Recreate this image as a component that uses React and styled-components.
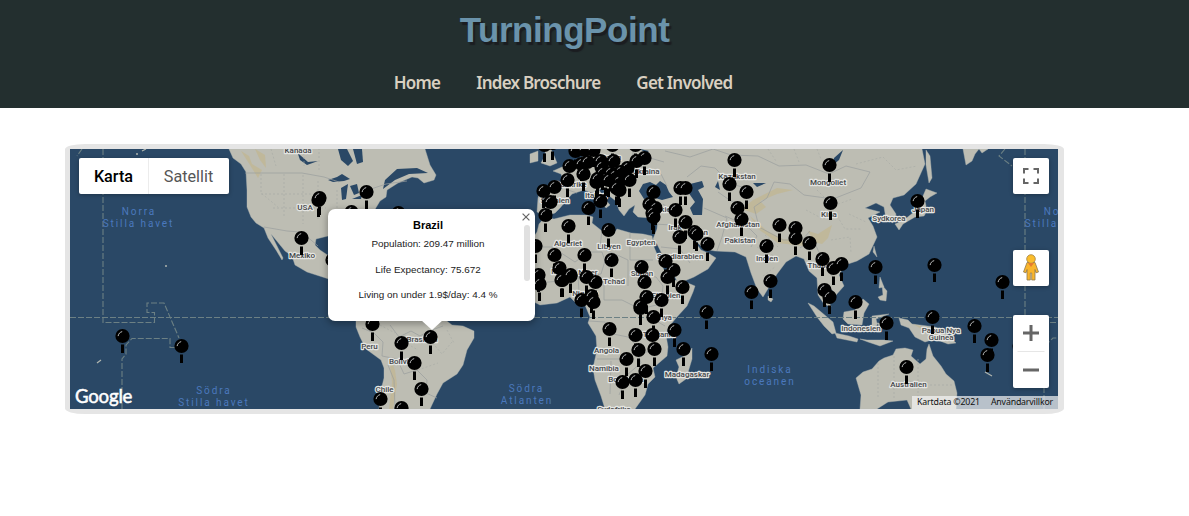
import React from 'react';
import styled, { createGlobalStyle } from 'styled-components';

const GlobalStyle = createGlobalStyle`
  body { margin: 0; background: #fff; font-family: "Liberation Sans", Arial, sans-serif; }
  * { box-sizing: border-box; }
`;

const Header = styled.header`
  height: 108px;
  background: #232f2f;
  display: flex;
  flex-direction: column;
  align-items: center;
  padding: 9px 60px 0 0;
`;
const Title = styled.h1`
  margin: 0;
  font: bold 35px/42px "Liberation Sans", Arial, sans-serif;
  letter-spacing: -0.45px;
  color: #6a93ab;
  text-shadow: 2px 3px 1px #1b1d21;
`;
const Nav = styled.nav`
  display: flex;
  gap: 36px;
  margin: 20px 3px 0 0;
`;
const NavLink = styled.a`
  font: 600 17px/24px "Noto Sans", "Open Sans", sans-serif;
  letter-spacing: -0.77px;
  color: #d9d0c1;
  white-space: nowrap;
`;
const MapFrame = styled.main`
  width: 999px;
  height: 270px;
  margin: 36px 0 0 65px;
  border: 5px solid #e5e5e5;
  border-right-width: 6px;
  border-radius: 2%;
`;
const MapArea = styled.div`
  position: relative;
  width: 988px;
  height: 260px;
  overflow: hidden;
  background: #2a4866;
`;
const MapDrawing = styled.svg`
  display: block;
  width: 988px;
  height: 260px;
`;
const MapTypes = styled.div`
  position: absolute;
  left: 9px;
  top: 9px;
  width: 150px;
  height: 36px;
  display: flex;
  background: #fff;
  border-radius: 2px;
  box-shadow: 0 1px 4px rgba(0, 0, 0, 0.3);
`;
const MapType = styled.button`
  width: ${(p) => (p.$active ? 69 : 81)}px;
  border: 0;
  border-left: ${(p) => (p.$active ? '0' : '1px solid #ececec')};
  padding: ${(p) => (p.$active ? '1px 0 0' : '1px 1px 0 0')};
  background: none;
  color: ${(p) => (p.$active ? '#000' : '#565656')};
  font: ${(p) => (p.$active ? 500 : 400)} 16.2px/35px Roboto, sans-serif;
`;
const Control = styled.button`
  position: absolute;
  right: 9px;
  top: ${(p) => p.$top}px;
  width: 36px;
  height: ${(p) => p.$height || 36}px;
  padding: 0;
  border: 0;
  border-radius: 2px;
  background: #fff;
  display: flex;
  align-items: center;
  justify-content: center;
  box-shadow: 0 1px 4px rgba(0, 0, 0, 0.3);
`;
const Popup = styled.section`
  position: absolute;
  left: 257.5px;
  top: 60px;
  width: 207px;
  height: 111.5px;
  padding: 9px 6px 0 0;
  border-radius: 7px;
  background: #fff;
  box-shadow: 0 2px 7px 1px rgba(0, 0, 0, 0.3);
  text-align: center;
  color: #222;
  &::after {
    content: '';
    position: absolute;
    left: 93px;
    top: 111px;
    border: 11px solid transparent;
    border-top: 10px solid #fff;
    border-bottom: 0;
  }
`;
const Country = styled.h2`
  margin: 0;
  font: bold 11px/14px "Liberation Sans", sans-serif;
  color: #000;
`;
const Fact = styled.p`
  margin: 0 0 ${(p) => p.$after || 12}px;
  font: 9.9px/14px "Liberation Sans", sans-serif;
  padding-top: ${(p) => (p.$first ? 5 : 0)}px;
`;
const Close = styled.svg`
  position: absolute;
  right: 5px;
  top: 4px;
`;
const ScrollThumb = styled.div`
  position: absolute;
  right: 5px;
  top: 16px;
  width: 6px;
  height: 56px;
  border-radius: 3px;
  background: #e0e0e0;
`;
const Credits = styled.div`
  position: absolute;
  right: 0;
  bottom: 0;
  height: 13px;
  display: flex;
  gap: 11px;
  padding: 0 5px;
  background: rgba(245, 245, 245, 0.7);
  color: #111;
  font: 8.8px/13px "Noto Sans", sans-serif;
  letter-spacing: -0.18px;
  white-space: nowrap;
`;
const GoogleMark = styled.div`
  position: absolute;
  left: 5px;
  bottom: 2px;
  font: 400 18.6px/22px Lato, sans-serif;
  letter-spacing: -0.2px;
  color: #fff;
  -webkit-text-stroke: 0.5px #fff;
`;

const land = [
  // North America
  'M229 149L233 158L241 164L246 172L247 190L247 207L251 217L256 223L264 228L268 238L276 250L282 260L283 258L277 246L271 234L276 240L285 251L292 256L295 265L307 272L335 281V260L320 250L315 245L316 239L328 236L345 236V215L374 211L380 201L386 197L387 190L398 183L412 177L418 178L424 183L434 180L436 175L430 165L425 149Z',
  // South America
  'M356 318L356 327L360 337L366 349L381 360L384 368L384 378L381 390L379 409H430L437 394L443 383L457 374L463 365L467 350L474 338V331L463 326L452 325L443 318Z',
  // Africa
  'M530 242L537 232L539 224L545 217L554 219L570 215L587 215L593 217L592 223L602 231L612 236L617 229L631 233L643 234L652 236L654 247L659 259L664 270L672 280L683 281L695 286L693 292L687 306L676 318L668 328L666 335L668 347L667 356L653 368L655 377L648 384L645 395L635 409H605L601 396L595 380L593 368L597 350L596 336L588 323L590 317L585 305L577 304L570 297L557 303L540 305L530 300Z',
  // Europe and Asia
  'M591 149L588 154L580 158L573 163L562 167L553 171L561 174L564 181L562 189L541 188L538 198L537 212L546 216L555 213L560 208L565 202L572 194L584 190L593 193L600 201L606 208L610 205L605 199L599 190L602 188L608 195L616 201L619 210L624 216L629 209L635 205L633 212L638 217L650 218L658 217L657 229L653 239L657 244L664 258L671 269L677 281L682 282L694 277L708 269L716 258L708 253L701 250L694 241L688 236L695 240L704 249L715 251L735 252L746 257L751 273L757 289L763 297L769 287L777 274L786 262L796 256L804 259L809 271L817 278L818 295L824 304L831 307L828 298L823 291L824 284L832 290L836 295L844 286L839 275L845 265L857 261L869 254L877 237L873 226L868 218L880 212L865 208L876 203L884 207L886 219L893 223L896 214L890 205L893 198L904 195L916 184L925 164L922 149Z',
  'M543 149L546 154L541 163L550 166L557 163L555 158L551 149Z',
  'M530 154L538 151L538 161L530 163Z',
  'M926 150L930 156L932 178L929 183L926 165Z',
  'M926 189L937 193L930 197L925 201L927 211L924 216L915 217L903 224L899 230L895 224L904 220L914 212L920 203Z',
  'M963 149H979L975 154L972 161L966 165Z',
  'M979 149L982 153L988 149Z',
  'M808 303L814 306L833 322L836 333L832 334L824 326L817 317Z',
  'M835 333L849 336L858 339L857 342L837 338Z',
  'M844 312L855 310L863 299L869 304L864 313L862 325L848 324L843 319Z',
  'M872 316L889 314L876 319L877 323L885 323L879 328L878 323L874 330L872 326Z',
  'M860 339L867 340L884 340L893 341L880 346L868 342Z',
  'M882 285L887 291L886 301L880 300L878 297L883 295Z',
  'M880 277L884 287L879 288Z',
  'M873 252L874 246L877 257Z',
  'M899 318L908 320L912 324L935 327L947 334L956 343L948 344L935 339L925 342L915 337L909 328L901 325Z',
  'M856 378L863 372L872 369L879 361L884 358L893 355L896 349L905 348L913 350L911 356L920 364L926 359L927 349L929 344L933 356L941 366L946 374L954 381L957 393L956 409H911L907 400L888 402L877 409H860L861 395Z',
  'M676 360L688 354L692 348L692 359L686 379L679 384L676 377L679 367Z',
  'M768 296L773 299L771 302L768 300Z',
];
const water = [
  'M639 191L643 184L650 182L656 185L660 181L666 185L669 192L673 197L662 200L652 197L644 199Z',
  'M690 184L702 181L704 187L698 190L703 199L702 215L693 215L690 208L695 202L688 192Z',
  'M328 180L337 177L342 174L350 179L344 181L333 182Z',
  'M341 188L348 184L346 199L342 200Z',
  'M350 186L357 184L359 193L354 195Z',
  'M352 199L362 195L361 199Z',
  'M338 149H347L353 161L348 166L341 160Z',
  'M353 149H362L363 162L357 164Z',
  'M385 180L397 169L417 168L428 173L409 174L395 180L383 189Z',
  'M297 151L300 155L308 162L318 161L307 165L300 160Z',
  'M834 158L843 150L839 160L832 166Z',
  'M753 183L766 183L757 187Z',
  'M715 187L718 181L720 190Z',
  'M640 149L649 151L646 153Z',
];
const mountains = [
  'M241 151L249 156L252 164L262 170L258 178L250 165Z',
  'M255 149L265 155L266 168L260 160Z',
  'M742 209L753 200L777 188L793 190L777 194L760 201L766 207L756 214Z',
  'M750 216L767 231L783 239L806 241L804 246L778 243L758 229Z',
  'M808 231L818 234L832 225L828 238L822 244L814 242Z',
  'M389 356L395 370L397 384L393 409H389L392 382Z',
  'M588 184L599 181L606 184L598 187Z',
  'M913 324L934 330L940 337L925 331Z',
];
const borders = [
  'M245 173H302L324 177L339 182', 'M264 227L287 231L300 232L311 240L318 246',
  'M368 190L386 184L407 181', 'M362 328L374 333L383 342L382 356L397 359L404 374L417 370L427 380L426 393L437 398M388 365L394 380L395 409M390 325L399 337L411 331L420 336L429 331L443 326',
  'M538 247L552 247L575 262L589 252L602 252L605 261L601 274L569 280L539 283M602 230L600 247L628 260L628 286M653 260H630V233M579 292L578 276L591 274L604 279L604 300L622 300L634 306L643 313M589 321L605 322L613 334L628 337L635 344L641 363L628 374L619 395M597 359H623L635 354L658 350M611 361L610 394M645 275L656 277L663 286L661 304L648 307L648 316L665 326',
  'M565 189L577 193M568 161L577 168L586 169M582 173L604 177L611 190M605 161L611 171L622 180L632 181M634 149L631 161L646 169L661 174L667 186M663 204L675 213L676 229L690 237M655 224L671 225L683 241M661 247L680 249L690 263M704 208L727 218L722 237L717 251M725 216L746 225L757 236L751 247M665 151L690 157L713 149L731 155L758 156L779 166L806 165L829 174L846 166L870 172L861 188L833 199L804 195L790 184L774 182L767 198L754 207L759 227L783 240L802 240L810 231M800 248L813 239L822 259L837 267M825 263L833 278',
  'M640 166L650 158L664 162M687 177L701 166L715 168L731 184L750 189M718 192L731 201L747 206',
];
const internal = [
  'M261 174V193L278 207M284 174V218M303 175V224M318 181V220M261 194H319M273 208H326M271 149L276 166M304 149V166M319 148V171M337 190V208',
  'M380 325L395 333M404 342L418 350M430 340L442 354L452 342M418 370L438 363M447 330L454 343',
  'M894 356V398M918 359V398M878 363V399M918 385H952M894 382H918',
  'M765 235L778 247M757 247L776 257M763 276L775 267M806 210L823 219L836 214L845 229L862 229M817 190L833 206L852 199M849 214L866 222M831 240L850 237L851 253M856 164L883 157L896 170L917 166M768 149L776 161M794 149L799 162M817 149L821 159',
];
const countries = [
  ['Kanada', 298, 153], ['USA', 305, 210], ['Mexiko', 302, 257.5], ['Peru', 369.5, 349],
  ['Brasilien', 422, 342], ['Bolivia', 401, 363.5], ['Chile', 384.5, 391.5], ['Algeriet', 568, 246],
  ['Libyen', 609, 248.5], ['Egypten', 641, 245], ['Tchad', 614, 284], ['Sudan', 642, 276],
  ['Niger', 588, 275], ['Nigeria', 585, 296], ['Mali', 559, 274], ['Etiopien', 666, 298],
  ['Kenya', 661, 319.5], ['Tanzania', 659, 337], ['Angola', 606.5, 353], ['Namibia', 604, 371],
  ['Botswana', 626, 382], ['Sydafrika', 614, 411.5], ['Madagaskar', 687, 376.5],
  ['Saudiarabien', 680, 258.5], ['Irak', 675, 230], ['Iran', 701, 235], ['Turkiet', 661, 212],
  ['Ukraina', 646, 174], ['Polen', 611, 160], ['Frankrike', 570, 187], ['Spanien', 555, 203],
  ['Italien', 596, 197.5], ['Kazakstan', 737, 179], ['Afghanistan', 738, 227],
  ['Pakistan', 740, 243], ['Indien', 767, 260.5], ['Mongoliet', 828, 184.5], ['Kina', 829, 217],
  ['Sydkorea', 889, 220.5], ['Japan', 923, 212], ['Thailand', 823, 268], ['Indonesien', 861, 331],
  ['Papua Nya', 941, 333], ['Guinea', 941, 340], ['Australien', 908.5, 387],
];
const seas = [
  ['Norra', 139, 215], ['Stilla havet', 138.5, 227], ['Södra', 214, 394], ['Stilla havet', 214, 406],
  ['Södra', 526.5, 392], ['Atlanten', 527, 404], ['Indiska', 770, 373], ['oceanen', 770, 385],
  ['Norra', 1061, 215], ['Stilla havet', 1060.5, 227],
];
const pins = [
  [366, 192], [318, 200], [319, 198], [301, 238], [351, 212], [398, 213], [332, 260], [372, 324], [401, 343],
  [414, 363], [421, 389], [380, 399], [401, 408], [544, 145], [552, 143], [575, 151], [584, 150], [593, 150],
  [612, 145], [635, 145], [569, 166], [581, 164], [587, 162], [600, 161], [601, 167], [613, 161], [602, 173],
  [644, 158], [636, 161], [627, 168], [620, 172], [629, 180], [610, 173], [614, 176], [618, 182], [605, 179],
  [596, 182], [597, 179], [583, 174], [608, 180], [619, 190], [616, 188], [567, 180], [554, 187], [543, 191],
  [550, 202], [545, 215], [588, 208], [600, 201], [568, 226], [608, 230], [653, 192], [649, 204], [655, 208],
  [652, 213], [653, 217], [680, 188], [685, 188], [675, 210], [685, 222], [679, 237], [694, 232], [696, 234],
  [707, 244], [734, 160], [729, 184], [746, 192], [737, 208], [741, 219], [779, 225], [795, 228], [795, 238],
  [809, 243], [766, 246], [829, 165], [830, 203], [917, 201], [535, 246], [554, 255], [584, 255], [611, 260],
  [641, 267], [665, 261], [673, 270], [667, 277], [682, 287], [559, 268], [570, 276], [562, 280], [538, 275],
  [539, 284], [561, 280], [586, 277], [595, 282], [570, 275], [644, 282], [581, 300], [591, 296], [593, 302],
  [646, 297], [661, 300], [640, 308], [640, 306], [653, 317], [609, 329], [635, 335], [652, 335], [638, 350],
  [654, 349], [626, 359], [645, 371], [622, 382], [635, 380], [674, 330], [706, 312], [683, 349], [711, 354],
  [751, 292], [770, 281], [822, 259], [833, 268], [841, 264], [824, 290], [829, 297], [855, 302], [875, 267],
  [934, 265], [1002, 282], [886, 323], [932, 317], [974, 326], [991, 340], [987, 355], [1019, 346], [906, 367],
  [122, 336], [181, 346], [430, 337],
];

function Pin({ x, y }) {
  return (
    <g transform={`translate(${x + 0.5} ${y})`}>
      <path d="M0 8.5V17" stroke="#000" strokeWidth="3" />
      <circle r="7.1" fill="#000" />
      <path d="M-4.3-.3C-3.9-2.3-2.7-3.7-.7-4.3" fill="none" stroke="#d0d3d3" strokeWidth=".9" strokeLinecap="round" />
    </g>
  );
}

function WorldMap() {
  return (
    <MapDrawing viewBox="70 149 988 260">
      <rect x="70" y="149" width="988" height="260" fill="#2a4866" />
      <g fill="#bdbdb3" stroke="#b4b8b2" strokeWidth=".4">
        {land.map((d) => <path key={d} d={d} />)}
      </g>
      <g fill="#c3b68d" opacity=".65">
        {mountains.map((d) => <path key={d} d={d} />)}
      </g>
      <g fill="#2a4866">
        {water.map((d) => <path key={d} d={d} />)}
      </g>
      <g fill="none" stroke="#999e9e" strokeWidth=".7">
        {borders.map((d) => <path key={d} d={d} />)}
      </g>
      <g fill="none" stroke="#a6aaa4" strokeWidth=".6" strokeDasharray="2 2">
        {internal.map((d) => <path key={d} d={d} />)}
      </g>
      <g fill="none" stroke="#6c8084" strokeWidth="1.1" strokeDasharray="6 2">
        <path d="M70 317.5H1058M103 149V322.5H154.5V312.5H147V303H164L179 338M122 409V359L126 354V345L132 338.5H170V347.5H176M82 149L77 156" />
        <path d="M1025 149V318M1005 149L999 156L1012 166M1044 409V347L1053 338H1058M1026 322.5H1058" />
      </g>
      <path d="M97 363L101 360M136 154L138 154M142 151L146 149M165 266H167M985 372L992 376" stroke="#aeb4ae" strokeWidth="1.3" />
      <g fill="#4a78bd" fontFamily="Roboto, sans-serif" fontSize="10" letterSpacing="1.9" textAnchor="middle">
        {seas.map(([name, x, y]) => <text key={`${name}${x}`} x={x} y={y}>{name}</text>)}
      </g>
      <g fill="#46484a" stroke="#e4e5e2" strokeWidth="2.4" strokeLinejoin="round" paintOrder="stroke"
        fontFamily="Roboto, sans-serif" fontWeight="500" fontSize="8" textAnchor="middle">
        {countries.map(([name, x, y]) => <text key={name} x={x} y={y}>{name}</text>)}
      </g>
      {pins.map(([x, y], i) => <Pin key={i} x={x} y={y} />)}
    </MapDrawing>
  );
}

function Pegman() {
  return (
    <svg width="18" height="28" viewBox="0 0 18 28">
      <path d="M5 8.5H13L16.5 18L14 18.8L13 15.5V26H9.7V19H8.3V26H5V15.5L4 18.8L1.5 18Z" fill="#f9b52c" stroke="#8f7a4c" strokeWidth=".8" />
      <circle cx="9" cy="5" r="4.3" fill="#fbbd2c" stroke="#a18043" strokeWidth=".8" />
      <path d="M6 9H12L9 13Z" fill="#e57b31" />
    </svg>
  );
}

export default function App() {
  return (
    <>
      <GlobalStyle />
      <Header>
        <Title>TurningPoint</Title>
        <Nav>
          <NavLink>Home</NavLink>
          <NavLink>Index Broschure</NavLink>
          <NavLink>Get Involved</NavLink>
        </Nav>
      </Header>
      <MapFrame>
        <MapArea>
          <WorldMap />
          <MapTypes>
            <MapType $active>Karta</MapType>
            <MapType>Satellit</MapType>
          </MapTypes>
          <Popup>
            <Country>Brazil</Country>
            <Fact $first>Population: 209.47 million</Fact>
            <Fact $after={11}>Life Expectancy: 75.672</Fact>
            <Fact>Living on under 1.9$/day: 4.4 %</Fact>
            <Close width="8" height="8" viewBox="0 0 8 8">
              <path d="M.6.6L7.4 7.4M7.4.6L.6 7.4" stroke="#666" strokeWidth="1.2" />
            </Close>
            <ScrollThumb />
          </Popup>
          <Control $top={9} aria-label="Fullscreen">
            <svg width="16" height="16" viewBox="0 0 16 16" fill="none" stroke="#666" strokeWidth="2">
              <path d="M1 5.5V1H5.5M10.5 1H15V5.5M15 10.5V15H10.5M5.5 15H1V10.5" />
            </svg>
          </Control>
          <Control $top={101} aria-label="Street View"><Pegman /></Control>
          <Control $top={166} $height={73} aria-label="Zoom">
            <svg width="28" height="73" viewBox="0 0 28 73" fill="none">
              <path d="M6 18H22M14 10V26M6 55H22" stroke="#666" strokeWidth="3" />
              <path d="M.5 36.5H27.5" stroke="#e6e6e6" />
            </svg>
          </Control>
          <GoogleMark>Google</GoogleMark>
          <Credits><span>Kartdata ©2021</span><span>Användarvillkor</span></Credits>
        </MapArea>
      </MapFrame>
    </>
  );
}
